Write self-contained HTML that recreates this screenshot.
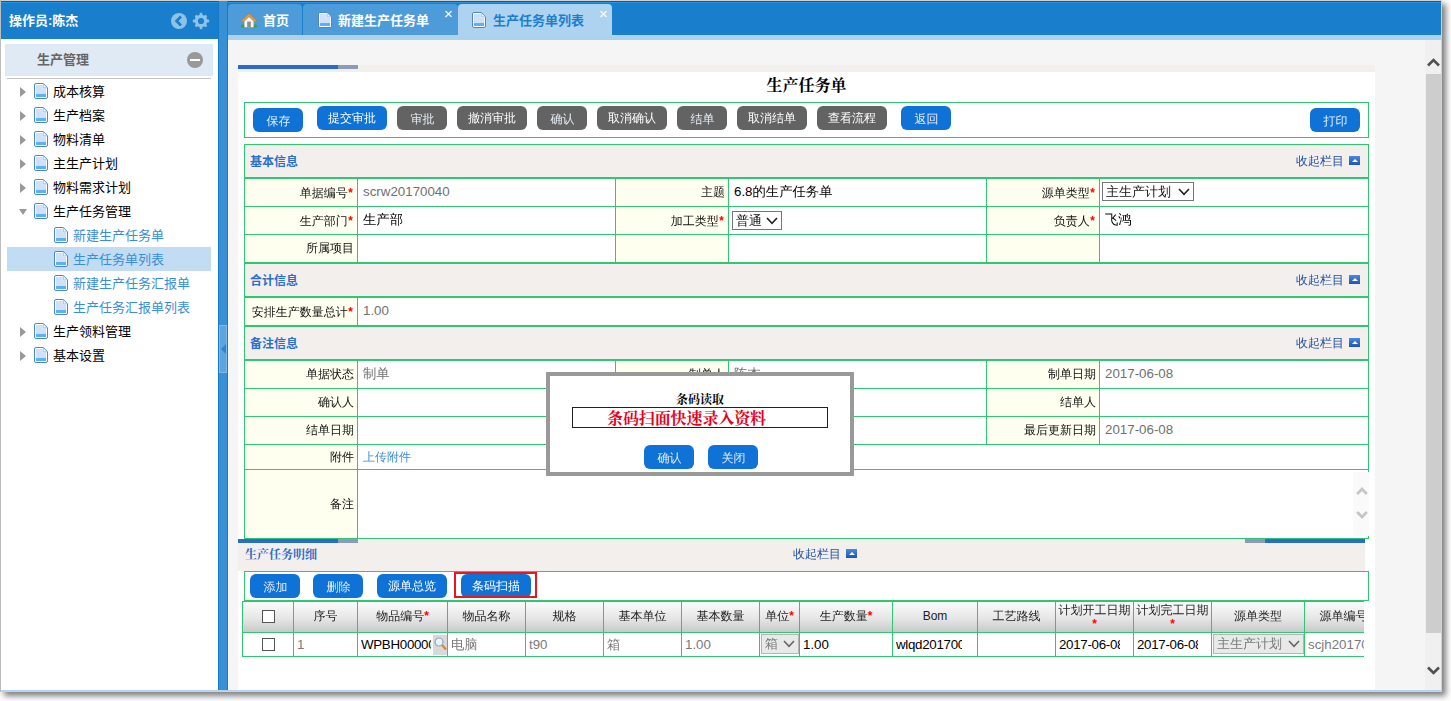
<!DOCTYPE html>
<html lang="zh-CN">
<head>
<meta charset="utf-8">
<title>生产任务单</title>
<style>
*{box-sizing:border-box;margin:0;padding:0}
html,body{width:1451px;height:701px;overflow:hidden;background:#fff;font-family:"Liberation Sans","WenQuanYi Zen Hei","Noto Sans CJK SC",sans-serif;font-size:12px;color:#000}
.abs{position:absolute}
svg{display:block}
#frame{position:absolute;left:0;top:0;width:1442px;height:692px;background:#d9d1c9;border-left:1px solid #bdbdbd;box-shadow:4px 4px 6px rgba(0,0,0,.5)}
#app{position:absolute;left:1px;top:1px;width:1440px;height:690px;border-bottom:1px solid #b4d2f0;background:#fff;overflow:hidden}
/* header */
#hdr{position:absolute;left:0;top:0;width:1440px;height:38px;background:#197ecc;border-top:1px solid #075c9e;box-shadow:inset 0 1px 0 #2196ee}
#op{font-family:"Liberation Sans","Noto Sans CJK SC",sans-serif;position:absolute;left:8px;top:11px;font-size:13px;font-weight:bold;color:#fff;line-height:16px}
/* sidebar */
#side{position:absolute;left:0;top:38px;width:217px;height:652px;background:#fff}
#divider{position:absolute;left:217px;top:0;width:10px;height:690px;background:#3a90d5;border-left:1px solid #147acc;border-right:1px solid #147acc}
#handle{position:absolute;left:0px;top:324px;width:8px;height:48px;background:#5da5de;border:1px solid #80b9e7}
#handle:after{content:"";position:absolute;left:1px;top:18px;border:5px solid transparent;border-left:0;border-right:5px solid #2f84d0}
#ph{position:absolute;left:4px;top:5px;width:208px;height:32px;background:#e0eaf4}
#ph span{font-family:"Liberation Sans","Noto Sans CJK SC",sans-serif;position:absolute;left:32px;top:8px;font-size:13px;font-weight:bold;color:#666;line-height:16px}
#ph i{position:absolute;left:182px;top:8px;width:16px;height:16px;border-radius:8px;background:#999}
#ph i:after{content:"";position:absolute;left:3px;top:7px;width:10px;height:2px;background:#fff}
#pl{position:absolute;left:6px;top:39px;width:204px;height:1px;background:#c4c4c4}
.ti{font-family:"Liberation Sans","Noto Sans CJK SC",sans-serif;position:absolute;left:0;width:217px;height:24px;font-size:13px;line-height:24px;color:#000}
.ti .ar{position:absolute;left:19px;top:8px;width:0;height:0;border:5px solid transparent;border-left:6.5px solid #999;border-right:0}
.ti .ad{position:absolute;left:18px;top:10px;width:0;height:0;border:4px solid transparent;border-top:6px solid #999;border-bottom:0}
.ti svg{position:absolute;left:33px;top:4px}
.ti span{position:absolute;left:52px;top:1px;white-space:nowrap}
.ti.c svg{left:53px}
.ti.c span{left:72px;color:#3a8ed8}
.ti.cur:before{content:"";position:absolute;left:6px;top:0;width:204px;height:24px;background:#c2dcf3}
/* tabs */
.tab{font-family:"Liberation Sans","Noto Sans CJK SC",sans-serif;position:absolute;top:3px;height:31px;border-radius:4px 4px 0 0;background:#4d9cd9;color:#fff;font-size:13px;font-weight:bold;line-height:16px}
.tab span{position:absolute;top:9px;white-space:nowrap}
.tab .x{position:absolute;top:2px;font-weight:normal;font-size:15px;color:#fff;font-family:"Liberation Sans",sans-serif}
.tab.on{background:#aed3f0;color:#1b7fd0;height:32px}
#strip{position:absolute;left:227px;top:34px;width:1213px;height:5px;background:#add2ee}
/* main */
#main{position:absolute;left:227px;top:39px;width:1197px;height:651px;background:#f5f5f5}
#vs{position:absolute;left:1424px;top:39px;width:16px;height:651px;background:#f0f0f0}
#vs b{position:absolute;left:1px;top:34px;width:15px;height:559px;background:#cdcdcd}
#white{position:absolute;left:10px;top:32px;width:1137px;height:619px;background:#fff}
#tstrip{position:absolute;left:10px;top:25px;width:1137px;height:7px;background:#f3efec}
.bar{position:absolute;height:4px}
h1{position:absolute;left:10px;top:35px;width:1137px;text-align:center;font-family:"Liberation Serif","Noto Serif CJK SC",serif;font-size:16px;font-weight:bold;line-height:22px;color:#000}
.gb{position:absolute;border:1px solid #2fc872;background:#fff}
.btn{position:absolute;height:24px;width:50px;border-radius:6px;background:#0e72d6;color:#e6eef6;font-size:12px;line-height:26px;text-align:center;white-space:nowrap;padding-left:1px}
.btn.w{width:70px;color:#fff;line-height:24px;padding-left:0}
.btn.g{background:#636363}
/* form */
.sh{position:absolute;left:16px;width:1125px;height:32px;background:#f3efec;border-left:1px solid #2fc872;border-right:1px solid #2fc872}
.sh b{font-family:"Liberation Sans","Noto Sans CJK SC",sans-serif;position:absolute;left:5px;top:10px;color:#2a70cc;font-size:12px;line-height:14px}
.sh em{position:absolute;right:24px;top:9px;font-style:normal;color:#1e4fa8;line-height:14px}
.ico{position:absolute;width:11px;height:9px;background:linear-gradient(#4a8ae0,#1a55b8)}
.ico:after{content:"";position:absolute;left:2.5px;top:2.5px;border:3px solid transparent;border-top:0;border-bottom:3.5px solid #fff}
.hl{position:absolute;left:16px;width:1125px;background:#2fc872}
.row{position:absolute;left:16px;width:1125px;height:28px;border-left:1px solid #2fc872;border-right:1px solid #2fc872;border-bottom:1px solid #2fc872;background:#fff}
.row .l{position:absolute;top:0;height:100%;width:113px;background:#fffff0;border-right:1px solid #2fc872;text-align:right;padding-right:3px;line-height:27px;color:#111;white-space:nowrap}
.row .l i,.th i{color:#f00;font-style:normal;font-weight:bold}
.row .l i{margin:0 1px 0 .5px}
.row .v{font-size:13.33px;position:absolute;top:0;height:100%;line-height:26px;padding-left:5px;border-right:1px solid #2fc872;white-space:nowrap}
.g8{color:#707070}
.sel{position:absolute;height:19px;border:1px solid #767676;background:#fff;font-size:13px;line-height:17px;padding-left:3px;white-space:nowrap;color:#111}
.sel svg{position:absolute;right:3px;top:5px}
.sel.dis{background:#e9e9e9;color:#777;border-color:#b5b5b5}
/* grid */
#grid{position:absolute;left:14px;top:561px;width:1122px;height:57px;overflow:hidden}
.th,.td{position:absolute;white-space:nowrap;overflow:hidden}
.th{top:0;height:32px;border:1px solid #2fc872;border-left:0;background:linear-gradient(#fbfbfb,#e6e6e6 55%,#c9c9c9);text-align:center;line-height:29px;color:#222}
.td{font-size:13.33px;top:32px;height:24px;border-right:1px solid #2fc872;border-bottom:1px solid #2fc872;line-height:23px;padding-left:3px;color:#7a7a7a;background:#fff}
.td.in{color:#000;padding-left:3px}
.clip{position:absolute;left:3px;top:0;height:23px;overflow:hidden;letter-spacing:-.3px}
.cb{position:absolute;width:13px;height:13px;border:1px solid #555;background:#fff}
/* modal */
#modal{position:absolute;left:545px;top:371px;width:308px;height:104px;border:4px solid #999;background:#fff}
#modal .t{position:absolute;left:0;top:17px;width:300px;text-align:center;font-weight:bold;font-size:12px;line-height:14px;font-family:"Liberation Serif","Noto Serif CJK SC",serif}
#modal .inp{position:absolute;left:22px;top:31px;width:256px;height:21px;border:1px solid #222;background:#fff}
#modal .inp span{position:absolute;left:34px;top:1px;font-family:"Liberation Serif","Noto Serif CJK SC",serif;font-weight:bold;font-size:16px;line-height:20px;color:#e6001a;white-space:nowrap;letter-spacing:-.1px}
</style>
</head>
<body>
<div id="frame"></div>
<div id="app">
<div id="hdr">
  <div id="op">操作员:陈杰</div>
  <svg class="abs" style="left:169px;top:10px" width="40" height="18" viewBox="0 0 40 18"><circle cx="9" cy="9" r="8" fill="#8ec3e8"/><path d="M11 4.5 L6.5 9 L11 13.5" fill="none" stroke="#197ecc" stroke-width="2.6"/><g fill="#8ec3e8"><circle cx="31" cy="9" r="6.2"/><g id="t"><rect x="29.6" y="0.8" width="2.8" height="16.4" rx="1"/><rect x="22.8" y="7.6" width="16.4" height="2.8" rx="1"/></g><g transform="rotate(45 31 9)"><rect x="29.6" y="1.2" width="2.8" height="15.6" rx="1"/><rect x="23.2" y="7.6" width="15.6" height="2.8" rx="1"/></g></g><circle cx="31" cy="9" r="3.1" fill="#197ecc"/></svg>
</div>
<div id="side">
  <div id="ph"><span>生产管理</span><i></i></div>
  <div id="pl"></div>
  <div class="ti" style="top:40px"><i class="ar"></i><svg width="14" height="16" viewBox="0 0 14 16"><path d="M2 .5h7.3L13.5 4.7V14a1.5 1.5 0 0 1-1.5 1.5H2A1.5 1.5 0 0 1 .5 14V2A1.5 1.5 0 0 1 2 .5z" fill="#fff" stroke="#4a86d2"/><path d="M2 2h6.5v3.5H12V11H2z" fill="#cfe1f8"/><rect x="2" y="11" width="10" height="3" fill="#5ab2f2"/><path d="M9.3 .8v4h4" fill="none" stroke="#8ab4e6" stroke-width=".8"/></svg><span>成本核算</span></div>
  <div class="ti" style="top:64px"><i class="ar"></i><svg width="14" height="16" viewBox="0 0 14 16"><path d="M2 .5h7.3L13.5 4.7V14a1.5 1.5 0 0 1-1.5 1.5H2A1.5 1.5 0 0 1 .5 14V2A1.5 1.5 0 0 1 2 .5z" fill="#fff" stroke="#4a86d2"/><path d="M2 2h6.5v3.5H12V11H2z" fill="#cfe1f8"/><rect x="2" y="11" width="10" height="3" fill="#5ab2f2"/><path d="M9.3 .8v4h4" fill="none" stroke="#8ab4e6" stroke-width=".8"/></svg><span>生产档案</span></div>
  <div class="ti" style="top:88px"><i class="ar"></i><svg width="14" height="16" viewBox="0 0 14 16"><path d="M2 .5h7.3L13.5 4.7V14a1.5 1.5 0 0 1-1.5 1.5H2A1.5 1.5 0 0 1 .5 14V2A1.5 1.5 0 0 1 2 .5z" fill="#fff" stroke="#4a86d2"/><path d="M2 2h6.5v3.5H12V11H2z" fill="#cfe1f8"/><rect x="2" y="11" width="10" height="3" fill="#5ab2f2"/><path d="M9.3 .8v4h4" fill="none" stroke="#8ab4e6" stroke-width=".8"/></svg><span>物料清单</span></div>
  <div class="ti" style="top:112px"><i class="ar"></i><svg width="14" height="16" viewBox="0 0 14 16"><path d="M2 .5h7.3L13.5 4.7V14a1.5 1.5 0 0 1-1.5 1.5H2A1.5 1.5 0 0 1 .5 14V2A1.5 1.5 0 0 1 2 .5z" fill="#fff" stroke="#4a86d2"/><path d="M2 2h6.5v3.5H12V11H2z" fill="#cfe1f8"/><rect x="2" y="11" width="10" height="3" fill="#5ab2f2"/><path d="M9.3 .8v4h4" fill="none" stroke="#8ab4e6" stroke-width=".8"/></svg><span>主生产计划</span></div>
  <div class="ti" style="top:136px"><i class="ar"></i><svg width="14" height="16" viewBox="0 0 14 16"><path d="M2 .5h7.3L13.5 4.7V14a1.5 1.5 0 0 1-1.5 1.5H2A1.5 1.5 0 0 1 .5 14V2A1.5 1.5 0 0 1 2 .5z" fill="#fff" stroke="#4a86d2"/><path d="M2 2h6.5v3.5H12V11H2z" fill="#cfe1f8"/><rect x="2" y="11" width="10" height="3" fill="#5ab2f2"/><path d="M9.3 .8v4h4" fill="none" stroke="#8ab4e6" stroke-width=".8"/></svg><span>物料需求计划</span></div>
  <div class="ti" style="top:160px"><i class="ad"></i><svg width="14" height="16" viewBox="0 0 14 16"><path d="M2 .5h7.3L13.5 4.7V14a1.5 1.5 0 0 1-1.5 1.5H2A1.5 1.5 0 0 1 .5 14V2A1.5 1.5 0 0 1 2 .5z" fill="#fff" stroke="#4a86d2"/><path d="M2 2h6.5v3.5H12V11H2z" fill="#cfe1f8"/><rect x="2" y="11" width="10" height="3" fill="#5ab2f2"/><path d="M9.3 .8v4h4" fill="none" stroke="#8ab4e6" stroke-width=".8"/></svg><span>生产任务管理</span></div>
  <div class="ti c" style="top:184px"><svg width="14" height="16" viewBox="0 0 14 16"><path d="M2 .5h7.3L13.5 4.7V14a1.5 1.5 0 0 1-1.5 1.5H2A1.5 1.5 0 0 1 .5 14V2A1.5 1.5 0 0 1 2 .5z" fill="#fff" stroke="#4a86d2"/><path d="M2 2h6.5v3.5H12V11H2z" fill="#cfe1f8"/><rect x="2" y="11" width="10" height="3" fill="#5ab2f2"/><path d="M9.3 .8v4h4" fill="none" stroke="#8ab4e6" stroke-width=".8"/></svg><span>新建生产任务单</span></div>
  <div class="ti c cur" style="top:208px"><svg width="14" height="16" viewBox="0 0 14 16"><path d="M2 .5h7.3L13.5 4.7V14a1.5 1.5 0 0 1-1.5 1.5H2A1.5 1.5 0 0 1 .5 14V2A1.5 1.5 0 0 1 2 .5z" fill="#fff" stroke="#4a86d2"/><path d="M2 2h6.5v3.5H12V11H2z" fill="#cfe1f8"/><rect x="2" y="11" width="10" height="3" fill="#5ab2f2"/><path d="M9.3 .8v4h4" fill="none" stroke="#8ab4e6" stroke-width=".8"/></svg><span>生产任务单列表</span></div>
  <div class="ti c" style="top:232px"><svg width="14" height="16" viewBox="0 0 14 16"><path d="M2 .5h7.3L13.5 4.7V14a1.5 1.5 0 0 1-1.5 1.5H2A1.5 1.5 0 0 1 .5 14V2A1.5 1.5 0 0 1 2 .5z" fill="#fff" stroke="#4a86d2"/><path d="M2 2h6.5v3.5H12V11H2z" fill="#cfe1f8"/><rect x="2" y="11" width="10" height="3" fill="#5ab2f2"/><path d="M9.3 .8v4h4" fill="none" stroke="#8ab4e6" stroke-width=".8"/></svg><span>新建生产任务汇报单</span></div>
  <div class="ti c" style="top:256px"><svg width="14" height="16" viewBox="0 0 14 16"><path d="M2 .5h7.3L13.5 4.7V14a1.5 1.5 0 0 1-1.5 1.5H2A1.5 1.5 0 0 1 .5 14V2A1.5 1.5 0 0 1 2 .5z" fill="#fff" stroke="#4a86d2"/><path d="M2 2h6.5v3.5H12V11H2z" fill="#cfe1f8"/><rect x="2" y="11" width="10" height="3" fill="#5ab2f2"/><path d="M9.3 .8v4h4" fill="none" stroke="#8ab4e6" stroke-width=".8"/></svg><span>生产任务汇报单列表</span></div>
  <div class="ti" style="top:280px"><i class="ar"></i><svg width="14" height="16" viewBox="0 0 14 16"><path d="M2 .5h7.3L13.5 4.7V14a1.5 1.5 0 0 1-1.5 1.5H2A1.5 1.5 0 0 1 .5 14V2A1.5 1.5 0 0 1 2 .5z" fill="#fff" stroke="#4a86d2"/><path d="M2 2h6.5v3.5H12V11H2z" fill="#cfe1f8"/><rect x="2" y="11" width="10" height="3" fill="#5ab2f2"/><path d="M9.3 .8v4h4" fill="none" stroke="#8ab4e6" stroke-width=".8"/></svg><span>生产领料管理</span></div>
  <div class="ti" style="top:304px"><i class="ar"></i><svg width="14" height="16" viewBox="0 0 14 16"><path d="M2 .5h7.3L13.5 4.7V14a1.5 1.5 0 0 1-1.5 1.5H2A1.5 1.5 0 0 1 .5 14V2A1.5 1.5 0 0 1 2 .5z" fill="#fff" stroke="#4a86d2"/><path d="M2 2h6.5v3.5H12V11H2z" fill="#cfe1f8"/><rect x="2" y="11" width="10" height="3" fill="#5ab2f2"/><path d="M9.3 .8v4h4" fill="none" stroke="#8ab4e6" stroke-width=".8"/></svg><span>基本设置</span></div>
</div>
<div id="divider"><div id="handle"></div></div>
<div class="tab" style="left:227px;width:74px"><i class="abs" style="left:13px;top:9px"><svg width="16" height="15" viewBox="0 0 16 15"><rect x="0" y="11.6" width="16" height="3" rx="1.5" fill="#45a02a"/><path d="M8 2.6L3.4 7v7.2h9.2V7z" fill="#f6f6f6"/><rect x="6.2" y="8.6" width="3.6" height="5.6" fill="#8c8c8c"/><path d="M8 .4L.4 7.5l1.5 1.7L8 3.7l6.1 5.5 1.5-1.7z" fill="#dd9c50" stroke="#b9762c" stroke-width=".6"/></svg></i><span style="left:35px">首页</span></div>
<div class="tab" style="left:302px;width:155px"><i class="abs" style="left:15px;top:8px"><svg width="14" height="16" viewBox="0 0 14 16"><path d="M2 .5h7.3L13.5 4.7V14a1.5 1.5 0 0 1-1.5 1.5H2A1.5 1.5 0 0 1 .5 14V2A1.5 1.5 0 0 1 2 .5z" fill="#fff" stroke="#4a86d2"/><path d="M2 2h6.5v3.5H12V11H2z" fill="#cfe1f8"/><rect x="2" y="11" width="10" height="3" fill="#5ab2f2"/><path d="M9.3 .8v4h4" fill="none" stroke="#8ab4e6" stroke-width=".8"/></svg></i><span style="left:35px">新建生产任务单</span><span class="x" style="left:141px">×</span></div>
<div class="tab on" style="left:457px;width:154px"><i class="abs" style="left:14px;top:8px"><svg width="14" height="16" viewBox="0 0 14 16"><path d="M2 .5h7.3L13.5 4.7V14a1.5 1.5 0 0 1-1.5 1.5H2A1.5 1.5 0 0 1 .5 14V2A1.5 1.5 0 0 1 2 .5z" fill="#fff" stroke="#4a86d2"/><path d="M2 2h6.5v3.5H12V11H2z" fill="#cfe1f8"/><rect x="2" y="11" width="10" height="3" fill="#5ab2f2"/><path d="M9.3 .8v4h4" fill="none" stroke="#8ab4e6" stroke-width=".8"/></svg></i><span style="left:35px">生产任务单列表</span><span class="x" style="left:141px;color:#fff">×</span></div>
<div id="strip"></div>
<div id="main">
<div id="tstrip"></div><div id="white"></div>
<div class="bar" style="left:10px;top:25px;width:100px;background:#2a6dc9"></div><div class="bar" style="left:110px;top:25px;width:20px;background:#8c9bb8"></div>
<h1>生产任务单</h1>
<div class="gb" style="left:16px;top:62px;width:1125px;height:36px"></div>
<div class="btn" style="left:25px;top:68px">保存</div><div class="btn w" style="left:89px;top:66px">提交审批</div><div class="btn g" style="left:169px;top:66px">审批</div><div class="btn w g" style="left:229px;top:66px">撤消审批</div><div class="btn g" style="left:309px;top:66px">确认</div><div class="btn w g" style="left:369px;top:66px">取消确认</div><div class="btn g" style="left:449px;top:66px">结单</div><div class="btn w g" style="left:509px;top:66px">取消结单</div><div class="btn w g" style="left:589px;top:66px">查看流程</div><div class="btn" style="left:673px;top:66px">返回</div><div class="btn" style="left:1082px;top:68px">打印</div>
<div class="hl" style="top:104px;height:1px"></div>
<div class="sh" style="top:105px"><b>基本信息</b><em>收起栏目</em><i class="ico" style="right:8px;top:11px"></i></div>
<div class="hl" style="top:137px;height:2px"></div>
<div class="row" style="top:139px;height:28px"><div class="l" style="left:0px;width:113px;padding-top:1px">单据编号<i>*</i></div><div class="v g8" style="left:113px;width:258px">scrw20170040</div><div class="l" style="left:371px;width:113px">主题</div><div class="v " style="left:484px;width:258px">6.8的生产任务单</div><div class="l" style="left:742px;width:113px;padding-top:1px">源单类型<i>*</i></div><div class="v " style="left:855px;width:268px;border-right:0"><div class="sel" style="left:2px;top:3px;width:92px">主生产计划<svg width="12" height="8" viewBox="0 0 12 8"><path d="M1 1l5 5.4L11 1" fill="none" stroke="#222" stroke-width="1.6"/></svg></div></div></div>
<div class="row" style="top:167px;height:28px"><div class="l" style="left:0px;width:113px;padding-top:1px">生产部门<i>*</i></div><div class="v " style="left:113px;width:258px">生产部</div><div class="l" style="left:371px;width:113px;padding-top:1px">加工类型<i>*</i></div><div class="v " style="left:484px;width:258px"><div class="sel" style="left:3px;top:4px;width:50px">普通<svg width="12" height="8" viewBox="0 0 12 8"><path d="M1 1l5 5.4L11 1" fill="none" stroke="#222" stroke-width="1.6"/></svg></div></div><div class="l" style="left:742px;width:113px;padding-top:1px">负责人<i>*</i></div><div class="v " style="left:855px;width:268px;border-right:0">飞鸿</div></div>
<div class="row" style="top:195px;height:28px"><div class="l" style="left:0px;width:113px">所属项目</div><div class="v " style="left:113px;width:258px"></div><div class="l" style="left:371px;width:113px"></div><div class="v " style="left:484px;width:258px"></div><div class="l" style="left:742px;width:113px"></div><div class="v " style="left:855px;width:268px;border-right:0"></div></div>
<div class="hl" style="top:223px;height:1px"></div>
<div class="sh" style="top:224px"><b>合计信息</b><em>收起栏目</em><i class="ico" style="right:8px;top:11px"></i></div>
<div class="hl" style="top:256px;height:2px"></div>
<div class="row" style="top:258px;height:28px"><div class="l" style="left:0px;width:113px;padding-top:1px">安排生产数量总计<i>*</i></div><div class="v g8" style="left:113px;width:1010px;border-right:0">1.00</div></div>
<div class="hl" style="top:286px;height:1px"></div>
<div class="sh" style="top:287px"><b>备注信息</b><em>收起栏目</em><i class="ico" style="right:8px;top:11px"></i></div>
<div class="hl" style="top:319px;height:2px"></div>
<div class="row" style="top:321px;height:28px"><div class="l" style="left:0px;width:113px">单据状态</div><div class="v g8" style="left:113px;width:258px">制单</div><div class="l" style="left:371px;width:113px">制单人</div><div class="v g8" style="left:484px;width:258px">陈杰</div><div class="l" style="left:742px;width:113px">制单日期</div><div class="v g8" style="left:855px;width:268px;border-right:0">2017-06-08</div></div>
<div class="row" style="top:349px;height:28px"><div class="l" style="left:0px;width:113px">确认人</div><div class="v " style="left:113px;width:258px"></div><div class="l" style="left:371px;width:113px">确认日期</div><div class="v " style="left:484px;width:258px"></div><div class="l" style="left:742px;width:113px">结单人</div><div class="v " style="left:855px;width:268px;border-right:0"></div></div>
<div class="row" style="top:377px;height:28px"><div class="l" style="left:0px;width:113px">结单日期</div><div class="v " style="left:113px;width:258px"></div><div class="l" style="left:371px;width:113px">最后更新人</div><div class="v g8" style="left:484px;width:258px">陈杰</div><div class="l" style="left:742px;width:113px">最后更新日期</div><div class="v g8" style="left:855px;width:268px;border-right:0">2017-06-08</div></div>
<div class="row" style="top:405px;height:25px"><div class="l" style="left:0px;width:113px;line-height:24px;padding-top:0">附件</div><div class="v " style="left:113px;width:1010px;border-right:0;line-height:23px"><span style="color:#3a8ed8;font-size:12px">上传附件</span></div></div>
<div class="row" style="top:430px;height:69px"><div class="l" style="left:0;width:113px;line-height:69px">备注</div><div class="v " style="left:113px;width:1010px;border-right:0"><div class="abs" style="right:-1px;top:2px;width:16px;height:64px;background:#fafafa"><svg class="abs" style="left:3px;top:14px" width="12" height="10" viewBox="0 0 12 10"><path d="M1.2 8L6 3l4.8 5" fill="none" stroke="#c6c6c6" stroke-width="2.8"/></svg><svg class="abs" style="left:3px;top:38px" width="12" height="10" viewBox="0 0 12 10"><path d="M1.2 2L6 7l4.8-5" fill="none" stroke="#c6c6c6" stroke-width="2.8"/></svg></div></div></div>
<div class="abs" style="left:10px;top:499px;width:1127px;height:32px;background:#f3efec"></div>
<div class="bar" style="left:10px;top:499px;width:100px;background:#2a6dc9"></div><div class="bar" style="left:110px;top:499px;width:20px;background:#8c9bb8"></div><div class="bar" style="left:1017px;top:499px;width:20px;background:#8c9bb8"></div><div class="bar" style="left:1037px;top:499px;width:100px;background:#2a6dc9"></div>
<div class="abs" style="left:17px;top:508px;font-weight:bold;color:#2a6cc8;line-height:14px;font-family:'Liberation Serif','Noto Serif CJK SC',serif">生产任务明细</div><div class="abs" style="left:565px;top:507px;color:#1e4fa8;line-height:14px">收起栏目</div><i class="ico" style="left:618px;top:509px"></i>
<div class="gb" style="left:16px;top:531px;width:1125px;height:30px"></div>
<div class="btn" style="left:22px;top:534px">添加</div><div class="btn" style="left:85px;top:534px">删除</div><div class="btn w" style="left:149px;top:534px">源单总览</div><div class="btn w" style="left:233px;top:534px">条码扫描</div><div class="abs" style="left:226px;top:532px;width:83px;height:26px;border:2px solid #ec1620"></div>
<div id="grid"><div class="abs" style="left:0;top:0;width:1px;height:56px;background:#2fc872"></div>
<div class="th" style="left:1px;width:51px"><i class="cb" style="left:19px;top:8px"></i></div><div class="td " style="left:1px;width:51px"><i class="cb" style="left:19px;top:5px"></i></div>
<div class="th" style="left:52px;width:64px">序号</div><div class="td " style="left:52px;width:64px">1</div>
<div class="th" style="left:116px;width:90px">物品编号<i>*</i></div><div class="td in" style="left:116px;width:90px"><div class="clip" style="width:70px">WPBH00000001</div><svg class="abs" style="right:0;top:2px" width="14" height="20" viewBox="0 0 14 20"><rect width="14" height="20" fill="#d9d9d9"/><circle cx="6" cy="7" r="4" fill="#e8f3fc" stroke="#8fa8c0" stroke-width="1.2"/><path d="M9 10l4 4.5" stroke="#d08a3a" stroke-width="2.2"/></svg></div>
<div class="th" style="left:206px;width:78px">物品名称</div><div class="td " style="left:206px;width:78px">电脑</div>
<div class="th" style="left:284px;width:78px">规格</div><div class="td " style="left:284px;width:78px">t90</div>
<div class="th" style="left:362px;width:78px">基本单位</div><div class="td " style="left:362px;width:78px">箱</div>
<div class="th" style="left:440px;width:78px">基本数量</div><div class="td " style="left:440px;width:78px">1.00</div>
<div class="th" style="left:518px;width:40px">单位<i>*</i></div><div class="td " style="left:518px;width:40px"><div class="sel dis" style="left:1px;top:1px;width:38px;height:20px;line-height:18px">箱<svg width="12" height="8" viewBox="0 0 12 8"><path d="M1 1l5 5.4L11 1" fill="none" stroke="#666" stroke-width="1.6"/></svg></div></div>
<div class="th" style="left:558px;width:93px">生产数量<i>*</i></div><div class="td in" style="left:558px;width:93px">1.00</div>
<div class="th" style="left:651px;width:85px">Bom</div><div class="td in" style="left:651px;width:85px"><div class="clip" style="width:66px">wlqd20170001</div></div>
<div class="th" style="left:736px;width:78px">工艺路线</div><div class="td " style="left:736px;width:78px"></div>
<div class="th" style="left:814px;width:78px;line-height:14px;padding-top:1px">计划开工日期<br><i>*</i></div><div class="td in" style="left:814px;width:78px"><div class="clip" style="width:61px">2017-06-08</div></div>
<div class="th" style="left:892px;width:78px;line-height:14px;padding-top:1px">计划完工日期<br><i>*</i></div><div class="td in" style="left:892px;width:78px"><div class="clip" style="width:61px">2017-06-08</div></div>
<div class="th" style="left:970px;width:93px">源单类型</div><div class="td " style="left:970px;width:93px"><div class="sel dis" style="left:1px;top:1px;width:91px;height:20px;line-height:18px">主生产计划<svg width="12" height="8" viewBox="0 0 12 8"><path d="M1 1l5 5.4L11 1" fill="none" stroke="#666" stroke-width="1.6"/></svg></div></div>
<div class="th" style="left:1063px;width:78px">源单编号</div><div class="td " style="left:1063px;width:78px">scjh20170001</div>
</div>
</div>
<div id="vs"><b></b><svg class="abs" style="left:2px;top:17px" width="13" height="10" viewBox="0 0 13 10"><path d="M1 8.5L6.5 3 12 8.5" fill="none" stroke="#505050" stroke-width="2.6"/></svg><svg class="abs" style="left:2px;top:626px" width="13" height="10" viewBox="0 0 13 10"><path d="M1 1.5L6.5 7 12 1.5" fill="none" stroke="#505050" stroke-width="2.6"/></svg></div>
<div id="modal"><div class="t">条码读取</div><div class="inp"><span>条码扫面快速录入资料</span></div><div class="btn" style="left:94px;top:69px">确认</div><div class="btn" style="left:158px;top:69px">关闭</div></div>
</div>
</body>
</html>
